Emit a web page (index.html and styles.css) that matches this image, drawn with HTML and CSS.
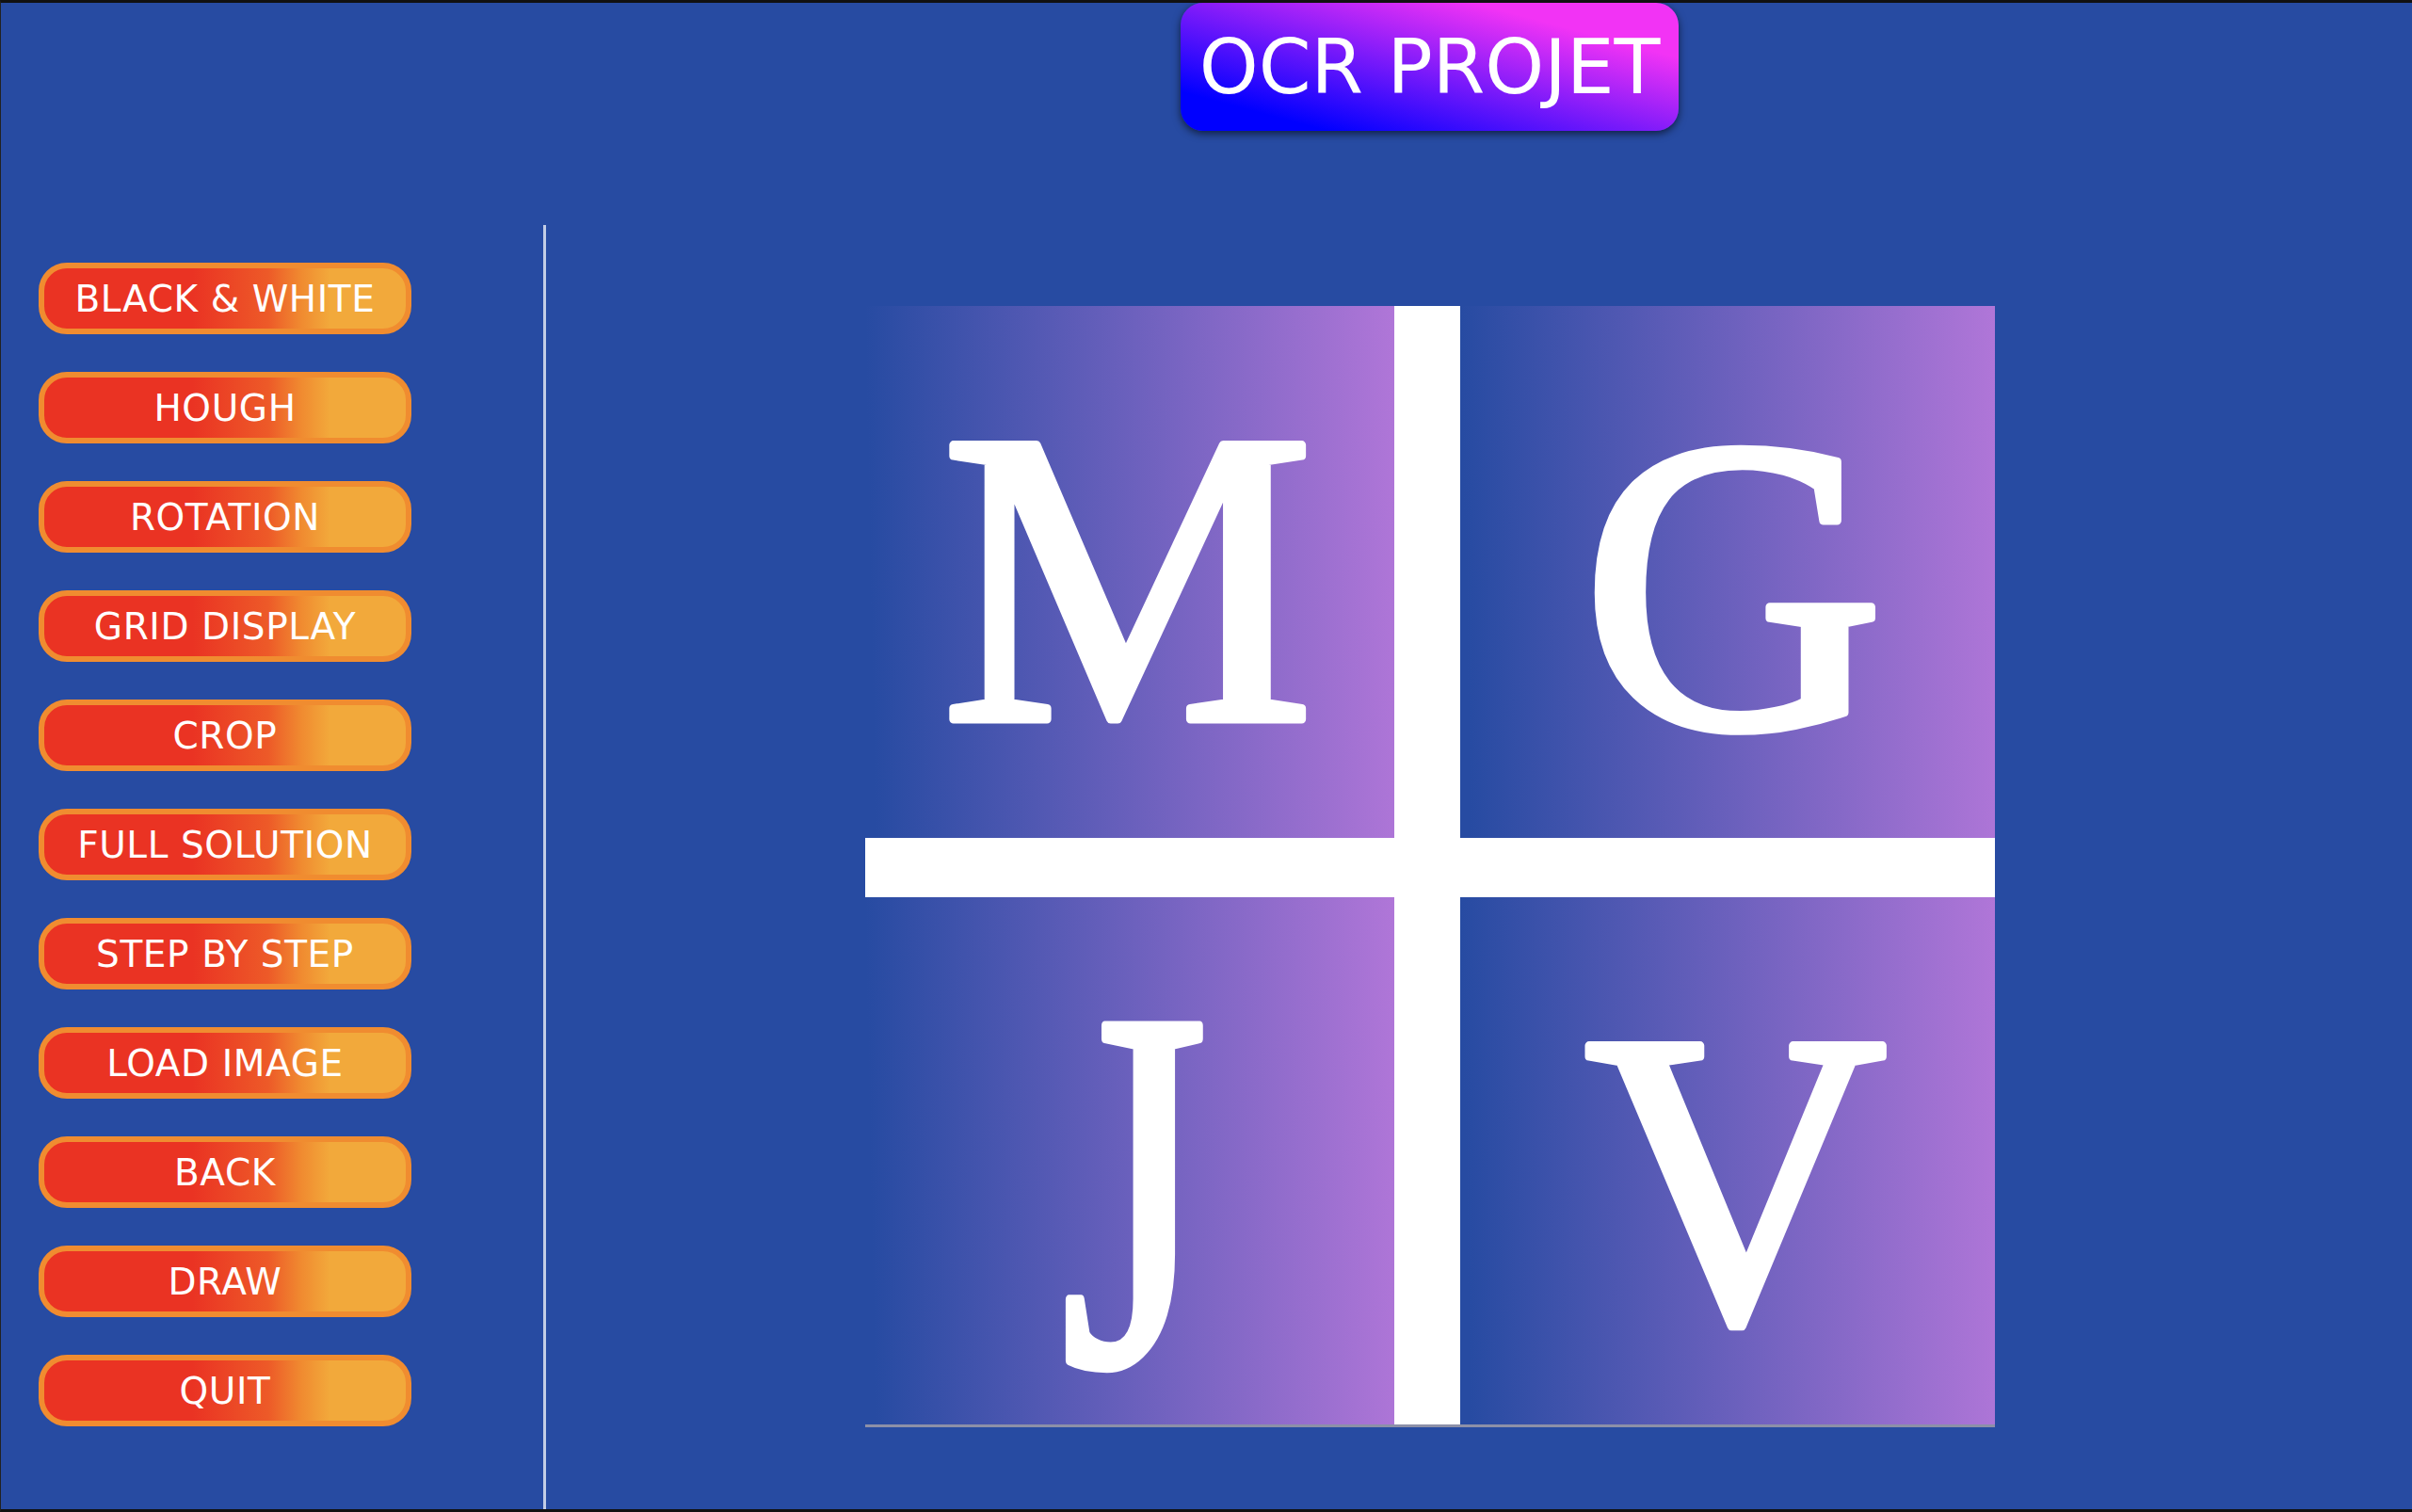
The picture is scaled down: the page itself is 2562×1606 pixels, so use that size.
FILE: index.html
```html
<!DOCTYPE html>
<html lang="en">
<head>
    <meta charset="UTF-8">
    <title>OCR PROJET</title>
    <link rel="stylesheet" href="styles.css">
</head>
<body>
    <div class="window">
        <header class="top-bar">
            <h1 class="title">OCR PROJET</h1>
        </header>
        <div class="main">
            <nav class="sidebar">
                <button class="tool-btn">BLACK &amp; WHITE</button>
                <button class="tool-btn">HOUGH</button>
                <button class="tool-btn">ROTATION</button>
                <button class="tool-btn">GRID DISPLAY</button>
                <button class="tool-btn">CROP</button>
                <button class="tool-btn">FULL SOLUTION</button>
                <button class="tool-btn">STEP BY STEP</button>
                <button class="tool-btn">LOAD IMAGE</button>
                <button class="tool-btn">BACK</button>
                <button class="tool-btn">DRAW</button>
                <button class="tool-btn">QUIT</button>
            </nav>
            <section class="preview">
                <svg class="logo" width="1200" height="1191" viewBox="0 0 1200 1191">
                    <defs>
                        <linearGradient id="tile" x1="0" y1="0.02" x2="1" y2="0">
                            <stop offset="0" stop-color="#274ba2"/>
                            <stop offset="1" stop-color="#b076d8"/>
                        </linearGradient>
                    </defs>
                    <rect class="logo-bg" width="1200" height="1191"/>
                    <rect fill="url(#tile)" x="0" y="0" width="562" height="565"/>
                    <rect fill="url(#tile)" x="632" y="0" width="568" height="565"/>
                    <rect fill="url(#tile)" x="0" y="628" width="562" height="563"/>
                    <rect fill="url(#tile)" x="632" y="628" width="568" height="563"/>
                    <rect class="logo-edge" x="0" y="1188" width="1200" height="3"/>
                    <text class="letter" x="81" y="439">M</text>
                    <text class="letter" x="761" y="447">G</text>
                    <text class="letter letter-j" transform="translate(208 1123) scale(1 1.37)">J</text>
                    <text class="letter" x="764" y="1077">V</text>
                </svg>
            </section>
        </div>
    </div>
</body>
</html>
```

FILE: styles.css
```css
* {
    box-sizing: border-box;
}

body {
    margin: 0;
    background-color: #111;
}

.window {
    height: 100vh;
    background-color: #274ba2;
    border-top: 3px solid #111;
    border-bottom: 3px solid #111;
    border-left: 1px solid #222;
    font-family: "DejaVu Sans", sans-serif;
    overflow: hidden;
}

.top-bar {
    height: 236px;
    padding-left: 1253px;
}

.title {
    width: 529px;
    height: 136px;
    margin: 0;
    display: flex;
    align-items: center;
    justify-content: center;
    border-radius: 24px;
    background: linear-gradient(15deg, #0000ff 15%, #f233f5 79%);
    box-shadow: 0 3px 8px rgba(0, 0, 0, 0.6);
    color: white;
    font-size: 80px;
    font-weight: normal;
    white-space: nowrap;
}

.main {
    display: flex;
    height: 1364px;
}

.sidebar {
    width: 579px;
    padding: 40px 0 0 40px;
    display: flex;
    flex-direction: column;
    gap: 40px;
    border-right: 3px solid #c3cde6;
}

.tool-btn {
    width: 396px;
    height: 76px;
    flex: none;
    padding: 0;
    border: 6px solid #f08c30;
    border-radius: 30px;
    background: linear-gradient(90deg, #ea3323 41%, #ed5a28 62%, #f08a30 71%, #f2a93b 79%);
    color: white;
    font-family: "DejaVu Sans", sans-serif;
    font-size: 39px;
    letter-spacing: 0.6px;
}

.preview {
    flex: 1;
    padding: 86px 0 0 339px;
}

.logo {
    display: block;
    overflow: visible;
}

.logo-bg {
    fill: white;
}

.logo-edge {
    fill: #8c90a8;
}

.letter {
    fill: white;
    stroke: white;
    stroke-width: 9px;
    stroke-linejoin: round;
    font-family: "Liberation Serif", serif;
    font-size: 445px;
}

.letter-j {
    stroke-width: 7px;
    font-size: 400px;
}
```
